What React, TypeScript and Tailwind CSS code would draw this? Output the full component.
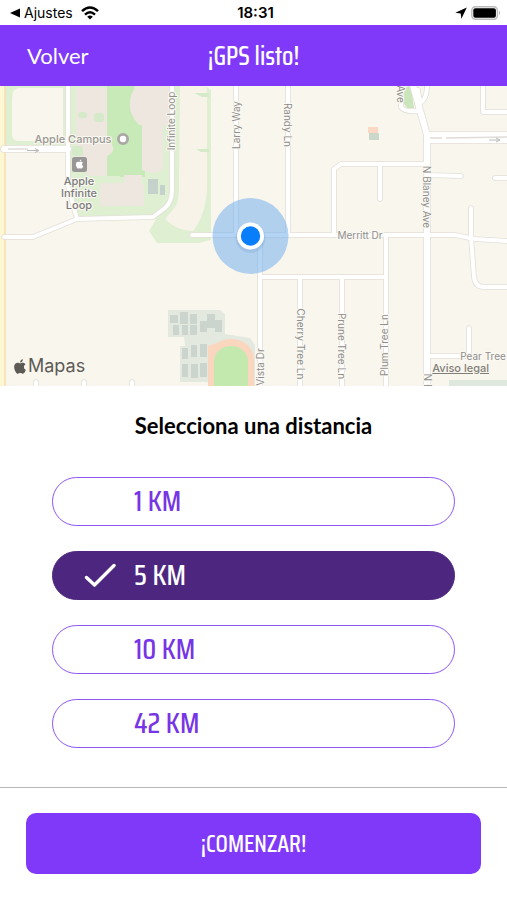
import { useState } from "react";

const DISTANCES = ["1 KM", "5 KM", "10 KM", "42 KM"];

const APPLE_PATH =
  "M12.15 6.9c-.95 0-2.42-1.08-3.96-1.04-2.04.03-3.91 1.18-4.96 3.01-2.12 3.68-.55 9.1 1.52 12.09 1.01 1.45 2.21 3.09 3.79 3.04 1.52-.07 2.09-.99 3.94-.99 1.83 0 2.35.99 3.96.95 1.64-.03 2.68-1.48 3.68-2.95 1.16-1.69 1.64-3.33 1.66-3.42-.04-.01-3.18-1.22-3.22-4.86-.03-3.04 2.48-4.49 2.6-4.56-1.43-2.09-3.62-2.32-4.39-2.38-2-.16-3.68 1.09-4.61 1.09zM15.53 3.83c.84-1.01 1.4-2.43 1.25-3.83-1.21.05-2.66.8-3.53 1.82-.78.9-1.45 2.34-1.27 3.71 1.34.1 2.72-.69 3.56-1.7";

const NARROW_ROADS = [
  "M4 237H33L77 219",
  "M68 86V186L77 219L153 217L165 208Q172 202 172 190V86",
  "M192 235H455L475 239L507 241",
  "M236 86V235",
  "M288 86V235",
  "M260 235V386",
  "M260 277H386",
  "M300 277V386",
  "M342 277V386",
  "M386 235V386",
  "M334 235V169L341 164H427",
  "M380 164V199",
  "M427 175L461 176",
  "M495 178H507",
  "M471 208V237L474 277Q475 287 484 287H507",
  "M483 86V112H507",
  "M401 97V107Q404 112 417 111",
  "M418 90L420 103Q427 99 427 86",
  "M427 356H469V328",
  "M36 382V388",
  "M84 382V388",
  "M132 382V388",
];

const WIDE_ROADS = ["M4 149H68", "M412 82L427 135V388", "M427 135H507", "M427 140H507"];

const STREETS = [
  { name: "Infinite Loop", x: 171, y: 121, turn: -90 },
  { name: "Larry Way", x: 236, y: 125, turn: -90 },
  { name: "Randy Ln", x: 288, y: 125, turn: 90 },
  { name: "Ave", x: 401, y: 94, turn: 90 },
  { name: "N Blaney Ave", x: 427, y: 197, turn: 90 },
  { name: "Merritt Dr", x: 360, y: 235, turn: 0 },
  { name: "Vista Dr", x: 260, y: 367, turn: -90 },
  { name: "Cherry Tree Ln", x: 301, y: 344, turn: 90 },
  { name: "Prune Tree Ln", x: 342, y: 346, turn: 90 },
  { name: "Plum Tree Ln", x: 384, y: 345, turn: -90 },
  { name: "N B", x: 428, y: 382, turn: 90 },
  { name: "Pear Tree", x: 483, y: 356, turn: 0 },
];

const SCHOOL_BLOCKS = [
  [170, 315, 8, 8], [180, 312, 8, 12], [190, 314, 7, 10], [173, 325, 6, 10], [182, 325, 6, 10],
  [190, 325, 7, 10], [200, 321, 7, 11], [207, 314, 8, 14], [215, 320, 7, 12],
  [182, 348, 6, 11], [191, 345, 6, 12], [200, 344, 7, 13], [182, 364, 6, 13], [191, 364, 7, 14], [200, 363, 7, 14],
];

function StatusBar() {
  return (
    <div className="grid h-[25px] grid-cols-3 items-center pr-1.5 pl-2.5 text-sm text-black">
      <div className="flex items-center gap-1">
        <svg className="h-2.5 w-2.5" viewBox="0 0 10 10" aria-hidden="true">
          <path d="M0 5L10 0.5V9.5Z" />
        </svg>
        <span>Ajustes</span>
        <svg className="ml-1 h-3.5 w-[18px]" viewBox="0 0 18 14" aria-hidden="true">
          <g fill="none" stroke="#000" strokeWidth="2.5">
            <path d="M1 5.2Q9 -2.2 17 5.2" />
            <path d="M4 8.6Q9 4 14 8.6" />
          </g>
          <path d="M6.2 10.8Q9 8.4 11.8 10.8L9 13.6Z" />
        </svg>
      </div>
      <div className="text-center text-[15px] font-semibold">18:31</div>
      <div className="flex items-center justify-end gap-1">
        <svg className="h-3 w-3" viewBox="0 0 12 12" aria-hidden="true">
          <path d="M11.8 .4L6.4 11.8L5.7 6.5L.3 5.7Z" />
        </svg>
        <svg className="h-3.5 w-[30px]" viewBox="0 0 30 14" aria-hidden="true">
          <rect x="0.8" y="0.8" width="25.6" height="12.4" rx="3.6" fill="#fff" stroke="#bbb" strokeWidth="1.4" />
          <rect x="2.3" y="2.3" width="22.6" height="9.4" rx="2" />
          <path d="M28 4.8Q30.3 7 28 9.2Z" fill="#bbb" />
        </svg>
      </div>
    </div>
  );
}

function StreetMap() {
  return (
    <svg className="block h-full w-full" viewBox="0 86 507 300" preserveAspectRatio="xMidYMid slice" role="img" aria-label="Mapa">
      <rect y="86" width="507" height="300" fill="#f9f6ee" />
      <path d="M5 86H205L211 90V240L199 243H157L149 231L156 217H77L68 190V145H5Z" fill="#dfefd2" />
      <path d="M77 219L153 217L156 219L149 231L152 236H77Z" fill="#f9f6ee" />
      <path d="M8 149H67V190L76 218L33 235H5V153Z" fill="#f9f6ee" />
      <path d="M18 88H63V141H18Q12 141 12 134V100Q12 89 18 88Z" fill="#f9f6ee" />
      <path d="M107 86H134V176H107Z M130 120H145V177H120Z" fill="#c8eab9" />
      <g fill="#ede7df">
        <path d="M76 88H107V176H88L76 157Z" />
        <path d="M136 86H170V125H139Q122 107 136 86Z" />
        <path d="M142 125H163V169Q155 176 142 170Z" />
        <path d="M100 183H124V175H142V184H144V206H100Z" />
        <path d="M107 144H112Q116 152 107 156Z" />
      </g>
      <g fill="#d5eac8">
        <rect x="78" y="112" width="9" height="6" rx="3" />
        <rect x="94" y="113" width="10" height="9" rx="3" />
        <rect x="72" y="146" width="11" height="10" rx="3" />
      </g>
      <path d="M180 86H206L207 92V148L204 150L207 153V190Q205 216 193 231Q176 231 165 219L175 207Q179 203 179 186Z" fill="#f8f3e9" />
      <path d="M194 93H209V97H202Z M196 149H209V152H201Z" fill="#d5ebc7" />
      <g fill="#c5d2cc">
        <rect x="148" y="179" width="10" height="15" />
        <rect x="160" y="185" width="5" height="10" />
      </g>
      <path d="M405 88L411 85L414 108H407L402 101Z" fill="#cbe6bd" />
      <rect x="368" y="127" width="10" height="6" fill="#fbd8c4" />
      <rect x="369" y="133" width="10" height="7" fill="#cad8cb" />
      <path d="M168 310H220L225 314V334L250 338L255 345V386H208V382H180V346H185L184 337H168Z" fill="#e4e9df" />
      <g fill="#ccd4ce">
        {SCHOOL_BLOCKS.map(([x, y, w, h]) => (
          <rect key={`${x}-${y}`} x={x} y={y} width={w} height={h} />
        ))}
      </g>
      <path d="M208 386V346L217 343Q231 335 245 343Q254 349 254 360V386Z" fill="#fbd6bf" />
      <path d="M214 386V361A17 15 0 0 1 248 361V386Z" fill="#c3e9ae" />
      <rect x="449" y="380" width="58" height="6" fill="#dee8df" />
      <rect y="86" width="5" height="300" fill="#fdf8d3" />
      <path d="M5 86V386" stroke="#f8dcb2" strokeWidth="1.5" />

      <g fill="none" strokeLinecap="round" strokeLinejoin="round">
        {NARROW_ROADS.map((d) => <path key={d} d={d} stroke="#e3e0d9" strokeWidth="5.6" />)}
        {WIDE_ROADS.map((d) => <path key={d} d={d} stroke="#e3e0d9" strokeWidth="7.6" />)}
        {NARROW_ROADS.map((d) => <path key={d} d={d} stroke="#fff" strokeWidth="4" />)}
        {WIDE_ROADS.map((d) => <path key={d} d={d} stroke="#fff" strokeWidth="6" />)}
      </g>
      <g fill="none" stroke="#dfddd8" strokeWidth="1.4">
        <path d="M430 138H442M446 138L507 137M8 149L28 149" />
        <path d="M27 150.5H38M35 148.5L39 150.5L35 152.5M489 140H499M496 138L500 140L496 142" stroke="#bcbab6" strokeWidth="1" />
      </g>

      <circle cx="250.5" cy="236" r="38" fill="#6aaaee" fillOpacity="0.5" />
      <circle cx="250.5" cy="238" r="15" fill="#4174a8" fillOpacity="0.14" />
      <circle cx="250.5" cy="236" r="13.5" fill="#fff" />
      <circle cx="250.5" cy="236" r="9.7" fill="#087efb" />

      <g
        className="font-['Inter',sans-serif] text-[10px]"
        fill="#8f8e8c"
        stroke="#fbf9f3"
        strokeWidth="2"
        strokeLinejoin="round"
        paintOrder="stroke"
        textAnchor="middle"
        dominantBaseline="central"
      >
        {STREETS.map(({ name, x, y, turn }) => (
          <text key={name} x={x} y={y} transform={`rotate(${turn} ${x} ${y})`}>{name}</text>
        ))}
      </g>
      <g
        className="font-['Inter',sans-serif] text-[11px] font-medium"
        stroke="#fbf9f3"
        strokeWidth="2"
        strokeLinejoin="round"
        paintOrder="stroke"
        textAnchor="middle"
      >
        <text x="73" y="143" fill="#999791">Apple Campus</text>
        <g fill="#7b7b7c">
          <text x="79" y="185">Apple</text>
          <text x="79" y="197">Infinite</text>
          <text x="79" y="209">Loop</text>
        </g>
      </g>
      <circle cx="123" cy="139" r="4.6" fill="#fff" stroke="#aaa8a5" strokeWidth="2.8" />
      <rect x="72" y="157" width="15" height="15" rx="2.5" fill="#999796" />
      <path d={APPLE_PATH} fill="#fff" transform="translate(75 159.5) scale(.38)" />
    </svg>
  );
}

export default function App() {
  const [distance, setDistance] = useState("5 KM");

  return (
    <div className="min-h-screen bg-white font-['Inter',sans-serif]">
      <StatusBar />
      <header className="grid h-[61px] grid-cols-[1fr_auto_1fr] items-center bg-[#8039f8] px-[27px] text-white">
        <button type="button" className="justify-self-start font-['Lato',sans-serif] text-[22px] leading-7">
          Volver
        </button>
        <h1 className="font-['Saira_Condensed','Roboto_Condensed','Liberation_Sans_Narrow','Liberation_Sans',sans-serif] text-[26px] leading-7 font-medium">
          ¡GPS listo!
        </h1>
      </header>

      <section className="relative h-[300px] overflow-hidden">
        <StreetMap />
        <div className="absolute bottom-2 left-3.5 flex items-center gap-0.5 text-[#5d5b55]">
          <svg className="h-[15px] w-3" viewBox="2 0 20 24" fill="currentColor" aria-hidden="true">
            <path d={APPLE_PATH} />
          </svg>
          <span className="text-lg leading-6">Mapas</span>
        </div>
        <a href="#legal" className="absolute right-[18px] bottom-2.5 text-[11px] leading-4 font-medium text-[#817f79] underline">
          Aviso legal
        </a>
      </section>

      <main>
        <fieldset className="px-[52px] pb-[39px]">
          <legend className="w-full pt-6 pb-[35px] text-center font-['Lato',sans-serif] text-[22px] leading-8 font-bold text-black">
            Selecciona una distancia
          </legend>
          <div className="flex flex-col gap-[25px]">
            {DISTANCES.map((value) => (
              <label
                key={value}
                className="group flex h-[49px] cursor-pointer items-center rounded-full border border-[#8f55ef] pb-0.5 pl-[31px] font-['Saira_Condensed','Roboto_Condensed','Liberation_Sans_Narrow','Liberation_Sans',sans-serif] text-[29px] leading-8 font-medium text-[#7735e5] has-checked:border-[#4d277f] has-checked:bg-[#4d277f] has-checked:text-white"
              >
                <input
                  type="radio"
                  name="distance"
                  value={value}
                  checked={distance === value}
                  onChange={() => setDistance(value)}
                  className="sr-only"
                />
                <svg className="mr-[18px] h-6 w-8 opacity-0 group-has-checked:opacity-100" viewBox="0 0 32 24" fill="none" aria-hidden="true">
                  <path d="M2.5 14.5L10.5 22L30 2.5" stroke="currentColor" strokeWidth="3.4" strokeLinecap="round" strokeLinejoin="round" />
                </svg>
                {value}
              </label>
            ))}
          </div>
        </fieldset>
      </main>

      <footer className="border-t border-[#b9b9b9] px-[26px] py-[25px]">
        <button
          type="button"
          className="h-[61px] w-full rounded-[10px] bg-[#8039f8] font-['Saira_Condensed','Roboto_Condensed','Liberation_Sans_Narrow','Liberation_Sans',sans-serif] text-2xl font-medium text-white"
        >
          ¡COMENZAR!
        </button>
      </footer>
    </div>
  );
}
